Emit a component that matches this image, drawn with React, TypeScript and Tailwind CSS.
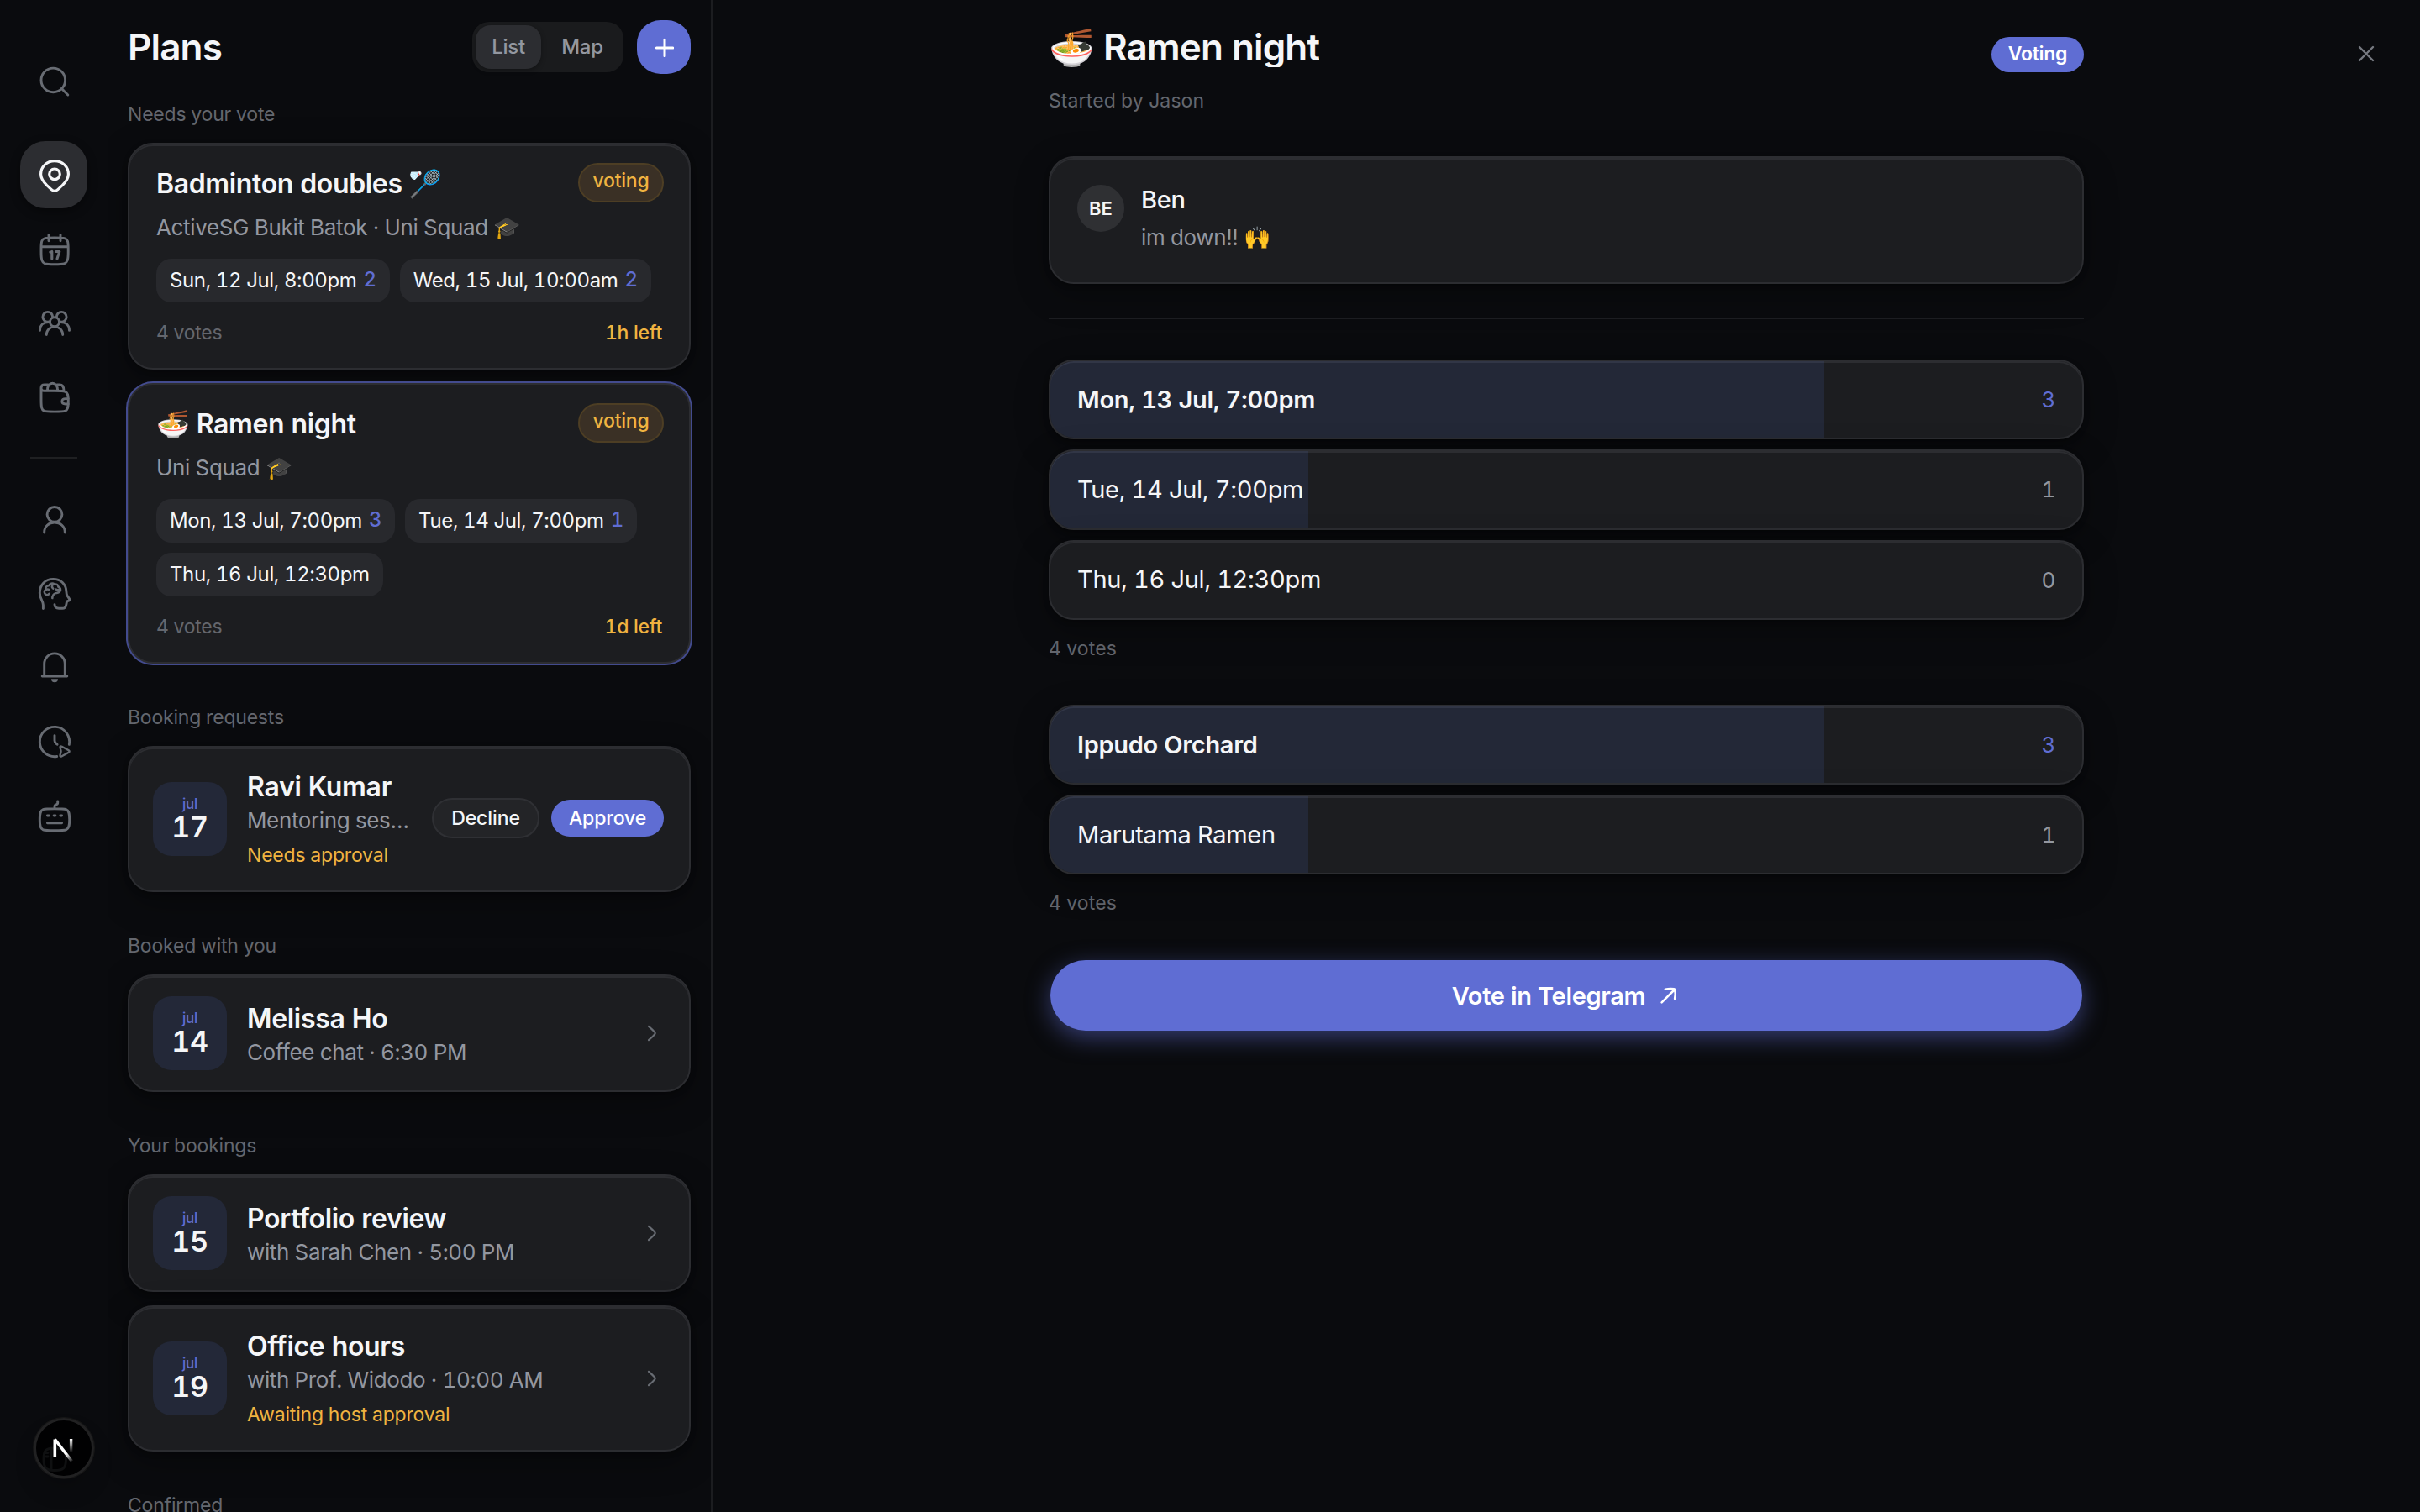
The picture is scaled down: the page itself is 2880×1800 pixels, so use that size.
import { ReactNode } from "react";
import clsx from "clsx";

interface IconProps {
    children?: ReactNode;
    active?: boolean;
}

const NavItem = ({ children, active }: IconProps) => (
    <button
        className={clsx(
            "flex h-20 w-20 items-center justify-center rounded-[30px]",
            active ? "bg-[#2c2d31] text-[#f5f6f8] shadow-[0_4px_12px_rgba(0,0,0,0.4)]" : "text-[#686c73]"
        )}
    >
        <svg width="40" height="40" viewBox="0 0 40 40" fill="none" stroke="currentColor" strokeWidth={active ? 3.2 : 2.9} strokeLinecap="round" strokeLinejoin="round" className="overflow-visible">
            {children}
        </svg>
    </button>
)

const Sidebar = () => (
    <nav className="flex w-32 shrink-0 flex-col items-center pt-14 pb-6">
        <NavItem>
            <circle cx="19.3" cy="19.4" r="14.3" />
            <path d="M29.5 29.6 36.8 37" />
        </NavItem>

        <div className="mt-8 flex flex-col gap-2">
            <NavItem active>
                <path d="M21 3.6C11.8 3.6 4.6 10.6 4.6 19.2c0 5.6 3.2 9.5 7.2 13.4l5.4 5c2.2 2 5.4 2 7.6 0l5.4-5c4-3.9 7.2-7.8 7.2-13.4C37.4 10.6 30.2 3.6 21 3.6Z" />
                <circle cx="21" cy="19.3" r="6.3" />
            </NavItem>
            <NavItem>
                <path d="M5 20c0-9 .8-11.3 4.5-12.3C11.5 7.1 15 7 21 7s9.6.1 11.7.7C36.3 8.7 37.2 11 37.2 20v4c0 9-1 12.6-4.7 13.9-2.1.7-5.5.9-11.5.9s-9.4-.2-11.5-.9C5.9 36.6 5 33 5 24ZM5 17.7h32.2M14 3.6v7.2M28 3.6v7.2" />
                <path d="M15.8 24.1c1 0 2-.6 2-.6V32M22.6 23.5h4.2L24 32" strokeWidth="3.1" />
            </NavItem>
            <NavItem>
                <circle cx="12.8" cy="13.3" r="5.9" />
                <circle cx="29.2" cy="13.3" r="5.9" />
                <circle cx="21" cy="19.2" r="5.5" fill="#0a0b0e" />
                <path d="M3.5 29.4c0-5.6 3.7-9.8 10.5-9.8M38.5 29.4c0-5.6-3.7-9.8-10.5-9.8M11.3 34.6c0-5.4 4-9.5 9.7-9.5s9.7 4.1 9.7 9.5" />
            </NavItem>
            <NavItem>
                <path d="M5 9.8v14c0 9 .5 12 3.4 13.3 2 .8 6 1 12.8 1s10.6-.2 12.6-1c2.7-1.2 3.5-3.6 3.5-11.3s-.8-10.3-3.5-11.5c-2-.8-5.8-1-12.6-1H8.5C6.3 13.3 5 12 5 9.8Zm0 0C5 7.3 6.5 6 9 6h4M12.5 12.5C12.5 7.5 15 4.2 18.5 4.2s6 3.3 6 8.3M24 6h3c3.2 0 5 2.2 5 7" />
                <path d="M37.2 22.6h-3.4c-2.5 0-3.9 1-3.9 3.2s1.4 3.2 3.9 3.2h3.4" />
            </NavItem>
        </div>

        <div className="my-8 h-0.5 w-14 bg-[#1f2022]" />

        <div className="flex flex-col gap-2">
            <NavItem>
                <circle cx="21" cy="14.4" r="8.9" />
                <path d="M8.7 36v-.6c0-6.4 5.4-11.4 12.3-11.4s12.3 5 12.3 11.4v.6" />
            </NavItem>
            <NavItem>
                <path d="M7.4 38.5v-4.3c0-4.8-4.1-7.3-4.1-14.2C3.3 10.3 10 3.4 19.2 3.4c9.3 0 15.3 6 15.7 14.7.1 2.4.2 3.7 1.2 5.2l2.4 3.6c.6.9.3 1.9-.7 2.2l-2.2.8-.9 4.3c-.6 2.9-1.6 4.1-4.4 4.1h-4.1c-3.2 0-5.2-1.5-5.2-4.7" />
                <path d="M14.6 20.8c-1 1.5-3.2 2-4.8.4-1.6-1.7-1.3-4.3.8-5.4-.8-2.6 1-4.7 3.6-4.6.9-2.5 4.5-3.5 6.6-1.6 2.5-.7 4.6.8 4.6 3.1 2.6.7 3.5 3.4 1.8 5.4-1.5 1.7-3 1.6-4.8 2-2.5.7-4 2.4-4.1 6M18.4 10.7c-.8 1.3-.4 2.9.8 3.9M22.6 15.6c1.1.8 2.3.9 3.4.4M11 16c1-.7 2.2-.7 3.1-.2" strokeWidth="2.5" />
            </NavItem>
            <NavItem>
                <path d="M8.7 31V16.3C8.7 9.3 14.2 3.9 21 3.9s12.3 5.4 12.3 12.4V31M6.2 31h29.6" />
                <path d="M17 34.3h8a4 4 0 0 1-8 0Z" fill="currentColor" stroke="none" />
            </NavItem>
            <NavItem>
                <path d="M38.3 24.4A17.65 17.65 0 1 0 23.7 38.45M21 13.6V19.5c0 1.5.5 2.4 1.5 3.3l1.6 1.5" />
                <path d="M27.6 28.3c-.4-1.8.5-2.4 2-1.6l8.1 4.6c1.2.7 1.2 1.7 0 2.4l-8.1 4.6c-1.5.8-2.4.2-2-1.6l.8-2.9c.2-.9.2-1.7 0-2.6Z" strokeWidth="2.4" />
            </NavItem>
            <NavItem>
                <path d="M3.3 25.7c0-7.6.8-11 4-12.1 2.3-.8 7-.9 13.7-.9s11.4.1 13.7.9c3.2 1.1 4 4.5 4 12.1s-.8 11-4 12.1c-2.3.8-7 .9-13.7.9s-11.4-.1-13.7-.9c-3.2-1.1-4-4.5-4-12.1ZM21 12.4V10c0-1.5.6-1.9 1.9-2.2 1.3-.3 1.8-.8 1.8-2V4M12.4 21h1.8M20.1 21h1.8M27.8 21h1.8M12.4 29.7h17.2" />
            </NavItem>
        </div>

        <div className="mt-auto">
            <NavItem>
                <path d="M8 21c0-10.6 2.4-13 13-13s13.5 2.4 13.5 13S31.6 34.5 21 34.5 8 31.6 8 21ZM17 8v26M11 13.5h2M11 18h2" />
            </NavItem>
        </div>
    </nav>
)

const NextBadge = () => (
    <div className="absolute bottom-10 left-10 flex h-[72px] w-[72px] items-center justify-center rounded-full border-[3px] border-[#212122] bg-black/85 shadow-[0_0_0_1px_#171717,0_16px_32px_-8px_rgba(0,0,0,0.24)]">
        <svg width="40" height="40" viewBox="0 0 40 40" fill="none">
            <defs>
                <linearGradient id="next-diag" x1="24" y1="26" x2="31" y2="36" gradientUnits="userSpaceOnUse">
                    <stop stopColor="#fff" />
                    <stop offset="1" stopColor="#fff" stopOpacity="0" />
                </linearGradient>
                <linearGradient id="next-bar" x1="29" y1="9" x2="29" y2="25" gradientUnits="userSpaceOnUse">
                    <stop stopColor="#fff" />
                    <stop offset="1" stopColor="#fff" stopOpacity="0" />
                </linearGradient>
            </defs>
            <path d="M9.3 31V9.5" stroke="#fff" strokeWidth="3.6" />
            <path d="M9.3 9.5 29.5 35.5" stroke="url(#next-diag)" strokeWidth="3.6" />
            <path d="M28.6 9v17" stroke="url(#next-bar)" strokeWidth="3.4" />
        </svg>
    </div>
)

const cardBase = "rounded-[30px] border-2 border-[#2c2d31] bg-[#1c1d20]";
const cardShadow = "shadow-[inset_0_2px_0_#2c2d31,0_2px_6px_rgba(0,0,0,0.3),0_12px_40px_rgba(0,0,0,0.3)]";

const SectionLabel = ({ children }: { children: ReactNode }) => (
    <h2 className="mb-4 text-[23px] leading-9 tracking-[-0.2px] text-[#64676e]">{children}</h2>
)

interface Slot {
    label: string;
    votes?: number;
}

interface VoteCardProps {
    title: string;
    subtitle: string;
    slots: Slot[];
    left: string;
    selected?: boolean;
}

const VoteCard = ({ title, subtitle, slots, left, selected }: VoteCardProps) => (
    <div className={clsx(cardBase, "pt-[22px] pr-[30px] pb-[23px] pl-8", selected ? "shadow-[0_0_0_2px_#434b8e]" : cardShadow)}>
        <div className="flex h-[49px] items-start justify-between">
            <h3 className="text-[32px] leading-[49px] font-semibold tracking-[-0.36px] text-[#f5f6f8]">{title}</h3>
            <span className="h-[47px] w-[102px] rounded-full border-2 border-[#4d3e24] bg-[#3a3025] text-center text-[23px] leading-[39px] font-medium text-[#f0b340]">voting</span>
        </div>
        <p className="mt-2.5 text-[26px] leading-[35px] tracking-[-0.35px] text-[#9397a0]">{subtitle}</p>
        <div className="mt-5 flex flex-wrap gap-3">
            {slots.map((slot) => (
                <span key={slot.label} className="flex h-[52px] items-center gap-2 rounded-[18px] bg-[#28292d] px-4 text-[24px] tracking-[-0.38px] text-[#f5f6f8]">
                    {slot.label}
                    {slot.votes && <span className="pb-[3px] font-medium text-[#5f6dd3]">{slot.votes}</span>}
                </span>
            ))}
        </div>
        <div className="mt-[17px] flex justify-between pr-0.5 text-[23px] leading-[38px]">
            <span className="text-[#64676e]">4 votes</span>
            <span className="font-medium text-[#f0b340]">{left}</span>
        </div>
    </div>
)

interface BookingCardProps {
    day: number;
    name: string;
    detail: string;
    status?: string;
    actions?: boolean;
}

const BookingCard = ({ day, name, detail, status, actions }: BookingCardProps) => (
    <div className={clsx(cardBase, cardShadow, "flex items-center py-6 pr-[30px] pl-7")}>
        <div className="flex h-[88px] w-[88px] shrink-0 flex-col items-center rounded-[22px] bg-[#232838] pt-4">
            <span className="text-[17px] leading-5 font-medium text-[#5f6dd3]">jul</span>
            <span className="text-[34px] leading-[35px] font-semibold text-[#f5f6f8]">{day}</span>
        </div>
        <div className="ml-6 min-w-0 flex-1">
            <h3 className="text-[32px] leading-[45px] font-semibold tracking-[-0.32px] text-[#f5f6f8]">{name}</h3>
            <p className="truncate text-[26px] leading-9 tracking-[-0.37px] text-[#9397a0]">{detail}</p>
            {status && <p className="mt-1 -mb-px text-[23px] leading-[38px] tracking-[-0.2px] text-[#f0b340]">{status}</p>}
        </div>
        {actions ? (
            <div className="mb-0.5 ml-6 flex items-center gap-3.5 text-[23px] font-medium">
                <button className="h-12 w-32 rounded-full border-2 border-[#2f3034] bg-[#232427] tracking-[-0.1px] text-[#f5f6f8]">Decline</button>
                <button className="h-11 w-[134px] rounded-full bg-[#5f6dd3] text-white tracking-[-0.1px]">Approve</button>
            </div>
        ) : (
            <svg width="28" height="28" viewBox="0 0 28 28" fill="none" stroke="#686c73" strokeWidth="2.2" strokeLinecap="round" strokeLinejoin="round" className="ml-6 shrink-0">
                <path d="M10 5.8c2.4 2 5 4.4 7.3 7.1.6.7.6 1.5 0 2.2-2.3 2.7-4.9 5.1-7.3 7.1" />
            </svg>
        )}
    </div>
)

const PlansPanel = () => (
    <section className="flex w-[720px] shrink-0 flex-col overflow-hidden border-r-2 border-[#1c1d20] px-6 pt-6">
        <header className="mb-[30px] flex h-16 items-center">
            <h1 className="flex-1 text-[44px] leading-[54px] font-semibold tracking-[-0.85px] text-[#f5f6f8]">Plans</h1>
            <div className="flex h-[60px] gap-1 rounded-[20px] bg-[#1a1b1d] p-1 text-[24px] leading-[52px] font-medium text-[#9397a0]">
                <button className="w-[78px] rounded-[18px] bg-[#2c2d31] shadow-[0_2px_6px_rgba(0,0,0,0.3)]">List</button>
                <button className="w-[90px]">Map</button>
            </div>
            <button className="ml-4 flex h-16 w-16 items-center justify-center rounded-[28px] bg-[#5f6dd3]">
                <svg width="24" height="24" viewBox="0 0 24 24" fill="none" stroke="#fff" strokeWidth="3" strokeLinecap="round">
                    <path d="M13 3.3v19.4M3.3 13h19.4" />
                </svg>
            </button>
        </header>

        <SectionLabel>Needs your vote</SectionLabel>
        <div className="mb-[46px] flex flex-col gap-4">
            <VoteCard
                title="Badminton doubles 🏸"
                subtitle="ActiveSG Bukit Batok · Uni Squad 🎓"
                slots={[
                    { label: "Sun, 12 Jul, 8:00pm", votes: 2 },
                    { label: "Wed, 15 Jul, 10:00am", votes: 2 },
                ]}
                left="1h left"
            />
            <VoteCard
                selected
                title="🍜 Ramen night"
                subtitle="Uni Squad 🎓"
                slots={[
                    { label: "Mon, 13 Jul, 7:00pm", votes: 3 },
                    { label: "Tue, 14 Jul, 7:00pm", votes: 1 },
                    { label: "Thu, 16 Jul, 12:30pm" },
                ]}
                left="1d left"
            />
        </div>

        <SectionLabel>Booking requests</SectionLabel>
        <div className="mb-[46px]">
            <BookingCard day={17} name="Ravi Kumar" detail="Mentoring session" status="Needs approval" actions />
        </div>

        <SectionLabel>Booked with you</SectionLabel>
        <div className="mb-[46px]">
            <BookingCard day={14} name="Melissa Ho" detail="Coffee chat · 6:30 PM" />
        </div>

        <SectionLabel>Your bookings</SectionLabel>
        <div className="mb-[46px] flex flex-col gap-4">
            <BookingCard day={15} name="Portfolio review" detail="with Sarah Chen · 5:00 PM" />
            <BookingCard day={19} name="Office hours" detail="with Prof. Widodo · 10:00 AM" status="Awaiting host approval" />
        </div>

        <SectionLabel>Confirmed</SectionLabel>
    </section>
)

interface Option {
    label: string;
    votes: number;
}

const TOTAL_VOTES = 4;

const Poll = ({ options }: { options: Option[] }) => {
    const top = Math.max(...options.map((o) => o.votes));

    return (
        <div>
            <div className="flex flex-col gap-3">
                {options.map((option) => {
                    const leading = option.votes === top;
                    return (
                        <div key={option.label} className={clsx(cardBase, cardShadow, "relative flex h-[95.3px] items-center justify-between overflow-hidden px-8 text-[29px] tracking-[-0.32px]")}>
                            <div className="absolute inset-y-0 left-0 bg-[#5271d8]/13" style={{ width: `${(option.votes / TOTAL_VOTES) * 100}%` }} />
                            <span className={clsx("relative text-[#f5f6f8]", leading && "font-semibold")}>{option.label}</span>
                            <span className={clsx("relative text-[26px]", leading ? "text-[#5f6dd3]" : "text-[#9397a0]")}>{option.votes}</span>
                        </div>
                    )
                })}
            </div>
            <p className="mt-4 text-[23px] leading-9 tracking-[0.1px] text-[#64676e]">4 votes</p>
        </div>
    )
}

const PlanDetail = () => (
    <main className="relative flex flex-1 justify-center">
        <div className="flex w-[1232px] flex-col">
            <header className="flex items-start justify-between pt-8">
                <div>
                    <h2 className="overflow-hidden text-[44px] leading-[48px] font-semibold tracking-[-0.85px] text-[#f5f6f8]">🍜 Ramen night</h2>
                    <p className="mt-[22px] text-[23px] leading-9 tracking-[0.1px] text-[#64676e]">Started by Jason</p>
                </div>
                <span className="mt-3 h-[42px] w-[110px] rounded-full bg-[#5f6dd3] text-center text-[23px] leading-10 font-semibold text-white">Voting</span>
            </header>

            <div className={clsx(cardBase, cardShadow, "mt-12 flex h-[152px] gap-5 p-8")}>
                <div className="flex h-14 w-14 items-center justify-center rounded-full bg-[#2f3033] text-[22px] font-semibold tracking-normal text-[#f5f6f8]">BE</div>
                <div>
                    <p className="text-[29px] leading-9 font-medium text-[#f5f6f8]">Ben</p>
                    <p className="mt-[5px] text-[26px] leading-[43px] tracking-[-0.37px] text-[#9397a0]">im down!! 🙌</p>
                </div>
            </div>

            <div className="mt-10 mb-12 h-0.5 bg-[#1c1d21]" />

            <div className="flex flex-col gap-[49px]">
                <Poll
                    options={[
                        { label: "Mon, 13 Jul, 7:00pm", votes: 3 },
                        { label: "Tue, 14 Jul, 7:00pm", votes: 1 },
                        { label: "Thu, 16 Jul, 12:30pm", votes: 0 },
                    ]}
                />
                <Poll
                    options={[
                        { label: "Ippudo Orchard", votes: 3 },
                        { label: "Marutama Ramen", votes: 1 },
                    ]}
                />
            </div>

            <button className="mx-0.5 mt-[50px] flex h-[84px] shrink-0 items-center justify-center gap-3.5 rounded-full bg-[#5f6dd3] text-[29px] font-semibold tracking-[-0.35px] text-white shadow-[0_8px_28px_rgba(95,109,211,0.5)]">
                Vote in Telegram
                <svg width="28" height="28" viewBox="0 0 30 30" fill="none" stroke="currentColor" strokeWidth="2.7" strokeLinecap="round" strokeLinejoin="round">
                    <path d="M6 24 22.5 7.5M10.5 7.200c4-.8 7.800-.9 11.200-.4.800.1 1.200.5 1.300 1.300.5 3.500.4 7.200-.4 11.200" />
                </svg>
            </button>
        </div>

        <button className="absolute top-11 right-11 flex h-10 w-10 items-center justify-center">
            <svg width="20" height="20" viewBox="0 0 20 20" fill="none" stroke="#777a81" strokeWidth="2.4" strokeLinecap="round">
                <path d="m2 2 16 16M18 2 2 18" />
            </svg>
        </button>
    </main>
)

export default function App() {
    return (
        <div className="relative flex h-screen w-screen overflow-hidden bg-[#0a0b0e] font-[Inter,'Noto_Color_Emoji',sans-serif] tracking-[-0.26px] tabular-nums">
            <Sidebar />
            <PlansPanel />
            <PlanDetail />
            <NextBadge />
        </div>
    )
}
